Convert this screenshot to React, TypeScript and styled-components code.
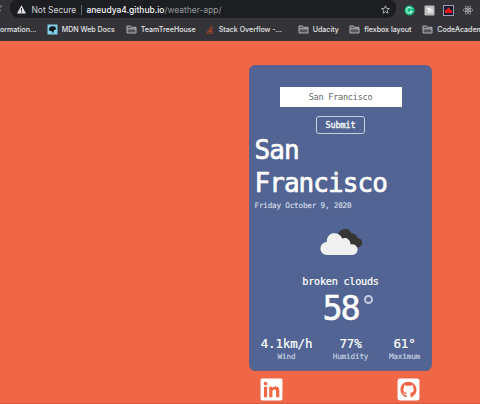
import React from 'react';
import styled, { createGlobalStyle } from 'styled-components';
import { FaLinkedin, FaGithubSquare, FaReact, FaStackOverflow } from 'react-icons/fa';

const GlobalStyle = createGlobalStyle`
  * { box-sizing: border-box; }
  body { margin: 0; overflow: hidden; background: #ef6747; }
`;

const Screen = styled.div`
  display: flex;
  flex-direction: column;
  width: 480px;
  height: 404px;
  overflow: hidden;
  background: #ef6747;
  border-bottom: 1px solid #d95a3e;
`;

const Browser = styled.header`
  flex: none;
  height: 41px;
  background: #343438;
  color: #e4e4e6;
  font-family: Inter, sans-serif;
  white-space: nowrap;
  overflow: hidden;
`;

const Toolbar = styled.div`
  display: flex;
  height: 18px;
`;

const Reload = styled.svg`
  flex: none;
  width: 10px;
  height: 18px;
`;

const AddressBar = styled.div`
  display: flex;
  align-items: center;
  width: 386px;
  height: 18px;
  padding: 1px 5px 0 6px;
  border-radius: 6px 6px 9px 9px;
  background: #1d1e21;
  font-size: 8.45px;
`;

const Secure = styled.span`
  width: 46px;
  margin-left: 4.5px;
  color: #d6d6d8;
`;

const Divider = styled.i`
  width: 1px;
  height: 10px;
  margin: 0 5px 0 3px;
  background: #68696d;
`;

const Url = styled.span`
  flex: 1;
  color: #96979b;
`;

const Host = styled.span`
  color: #f5f5f6;
  font-weight: 500;
`;

const Extensions = styled.div`
  display: flex;
  align-items: center;
  gap: 8.5px;
  padding: 2px 0 0 8px;
`;

const ExtIcon = styled.svg`
  flex: none;
  width: 11px;
  height: 11px;
`;

const Bookmarks = styled.nav`
  display: grid;
  grid-template-columns: 46.5px 79px 79px 93px 51.5px 73px 70px;
  align-items: center;
  height: 22px;
  font-size: 7.05px;
  font-weight: 500;
`;

const Bookmark = styled.span`
  display: flex;
  align-items: center;
  gap: 4.3px;
`;

const BookmarkIcon = styled.svg`
  flex: none;
  width: 11px;
  height: 11px;
`;

const Stack = styled(FaStackOverflow)`
  flex: none;
  width: 10px;
  height: 9px;
  color: #b64a22;
`;

const Page = styled.main`
  display: flex;
  flex-direction: column;
  width: 183px;
  margin: 24px 0 0 248.5px;
  font-family: 'DejaVu Sans Mono', monospace;
  color: #fff;
`;

const Card = styled.section`
  display: flex;
  flex-direction: column;
  align-items: center;
  height: 305.5px;
  padding: 21px 4px 0 5px;
  border: 1px solid #695f87;
  border-radius: 6px;
  background: #516493;
`;

const CityInput = styled.input`
  flex: none;
  width: 122px;
  height: 20px;
  padding: 0;
  border: 0;
  border-radius: 0;
  background: #fff;
  color: #65666a;
  font: 8.5px 'DejaVu Sans Mono', monospace;
  letter-spacing: -0.22px;
  text-align: center;
`;

const Submit = styled.button`
  flex: none;
  width: 49px;
  height: 18px;
  margin-top: 9px;
  padding: 0;
  border: 1px solid #c8cfdf;
  border-radius: 3px;
  background: transparent;
  color: #fff;
  font: 8.5px 'DejaVu Sans Mono', monospace;
  letter-spacing: -0.15px;
  -webkit-text-stroke: 0.3px #fff;
`;

const City = styled.h1`
  align-self: stretch;
  margin: 0;
  font-size: 26px;
  font-weight: 400;
  line-height: 33px;
  letter-spacing: -0.95px;
  -webkit-text-stroke: 0.65px #fff;
`;

const DateLine = styled.p`
  align-self: stretch;
  margin: 0;
  color: #d5dbe7;
  font-size: 7.6px;
  line-height: 12px;
  letter-spacing: -0.17px;
  -webkit-text-stroke: 0.15px #d5dbe7;
`;

const Clouds = styled.svg`
  flex: none;
  width: 44px;
  height: 28px;
  margin: 16px 0 0 2px;
`;

const Condition = styled.p`
  margin: 19px 0 0;
  font-size: 10.2px;
  line-height: 14px;
  letter-spacing: -0.25px;
  -webkit-text-stroke: 0.2px #fff;
`;

const Temperature = styled.p`
  display: flex;
  align-items: flex-start;
  margin: 0 0 0 15px;
  font-size: 33.5px;
  line-height: 40px;
  letter-spacing: -2.2px;
  -webkit-text-stroke: 0.5px #fff;
`;

const Degree = styled.i`
  width: 9px;
  height: 9px;
  margin: 6px 0 0 6px;
  border: 2px solid #c3cadb;
  border-radius: 50%;
`;

const Stats = styled.dl`
  display: grid;
  grid-template-columns: 64px 64px 44px;
  width: 172px;
  margin: 7px 0 0;
`;

const Stat = styled.div`
  display: flex;
  flex-direction: column;
  align-items: center;
`;

const Value = styled.dd`
  margin: 0;
  font-size: 12.6px;
  line-height: 15px;
  letter-spacing: -0.2px;
  -webkit-text-stroke: 0.2px #fff;
`;

const Label = styled.dt`
  order: 2;
  color: #cbd3e2;
  font-size: 7.6px;
  line-height: 11px;
  letter-spacing: -0.12px;
  -webkit-text-stroke: 0.15px #cbd3e2;
`;

const Social = styled.footer`
  display: flex;
  justify-content: space-between;
  padding: 6.5px 10.5px 0 10.5px;
  font-size: 25px;
  line-height: 0;
`;

const Folder = () => (
  <BookmarkIcon viewBox="0 0 11 11" fill="#55565b" stroke="#bbbcbf" strokeWidth=".9">
    <path d="M1 9V2h3.5l1 1.3H10V9zM1 4.8h9" />
  </BookmarkIcon>
);

const stats = [
  { label: 'Wind', value: '4.1km/h' },
  { label: 'Humidity', value: '77%' },
  { label: 'Maximum', value: '61°' },
];

export default function App() {
  return (
    <Screen>
      <GlobalStyle />
      <Browser>
        <Toolbar>
          <Reload viewBox="0 0 10 18">
            <path d="M0 7h1V5M0 11l1-1" stroke="#8b8c90" fill="none" />
          </Reload>
          <AddressBar>
            <ExtIcon viewBox="0 0 11 11">
              <path d="M5.5 1.2 10 9.5H1z" fill="#e2e2e3" />
              <path d="M5.5 4v2.6M5.5 7.4v1.1" stroke="#1d1e21" />
            </ExtIcon>
            <Secure>Not Secure</Secure>
            <Divider />
            <Url><Host>aneudya4.github.io</Host>/weather-app/</Url>
            <ExtIcon viewBox="0 0 11 11" fill="none" stroke="#bcbdc0" strokeWidth=".9">
              <path d="m5.5 1.8 1.1 2.6 2.8.2-2.1 1.8.6 2.8-2.4-1.5-2.4 1.5.6-2.8-2.1-1.8 2.8-.2z" />
            </ExtIcon>
          </AddressBar>
          <Extensions>
            <ExtIcon viewBox="0 0 11 11">
              <circle cx="5.5" cy="5.5" r="5" fill="#16bd83" />
              <path d="M7.8 3.8A2.8 2.8 0 1 0 8 6.2H6" stroke="#c8f4e0" strokeWidth="1.1" fill="none" />
            </ExtIcon>
            <ExtIcon viewBox="0 0 11 11">
              <rect x=".5" y=".5" width="10" height="10" rx="1" fill="#bdbdbf" />
              <path d="M2.5 3.3h4M4.5 3.3v4.5M6 8V4.5h2V8" stroke="#f5f5f5" strokeWidth="1.2" fill="none" />
            </ExtIcon>
            <ExtIcon viewBox="0 0 11 11">
              <rect x=".5" y=".5" width="10" height="10" fill="#1b1d34" stroke="#9a9dae" />
              <path d="M2 8V5.2l2-.4.7-2h2l.4 2 2 .4V8z" fill="#e8191c" />
            </ExtIcon>
            <FaReact size={10} color="#d2d2d4" />
          </Extensions>
        </Toolbar>
        <Bookmarks>
          <Bookmark>ormation...</Bookmark>
          <Bookmark>
            <BookmarkIcon viewBox="0 0 11 11">
              <rect x=".5" y=".5" width="10" height="10" fill="#83d0e9" />
              <path d="m2 4.2 2-2 4 .2L9.3 5 7 6.5 6 9.5 4.8 7.2 2 6.5z" fill="#111a20" />
            </BookmarkIcon>
            MDN Web Docs
          </Bookmark>
          <Bookmark><Folder />TeamTreeHouse</Bookmark>
          <Bookmark><Stack />Stack Overflow -...</Bookmark>
          <Bookmark><Folder />Udacity</Bookmark>
          <Bookmark><Folder />flexbox layout</Bookmark>
          <Bookmark><Folder />CodeAcademy</Bookmark>
        </Bookmarks>
      </Browser>
      <Page>
        <Card>
          <CityInput defaultValue="San Francisco" aria-label="City" />
          <Submit>Submit</Submit>
          <City>San<br />Francisco</City>
          <DateLine>Friday October 9, 2020</DateLine>
          <Clouds viewBox="0 0 44 28">
            <path d="M18 8a7 7 0 0 1 13.5-2.5 5.5 5.5 0 0 1 6 4.5 4.7 4.7 0 1 1-1 9.3H22z" fill="#363637" />
            <path d="M7 27a6.5 6.5 0 0 1-.3-13 8 8 0 0 1 15.5-3.5 6 6 0 0 1 8.3 6A5.4 5.4 0 1 1 32 27z" fill="#f0f0f0" />
          </Clouds>
          <Condition>broken clouds</Condition>
          <Temperature>58<Degree /></Temperature>
          <Stats>
            {stats.map(({ label, value }) => (
              <Stat key={label}>
                <Label>{label}</Label>
                <Value>{value}</Value>
              </Stat>
            ))}
          </Stats>
        </Card>
        <Social>
          <FaLinkedin />
          <FaGithubSquare />
        </Social>
      </Page>
    </Screen>
  );
}
